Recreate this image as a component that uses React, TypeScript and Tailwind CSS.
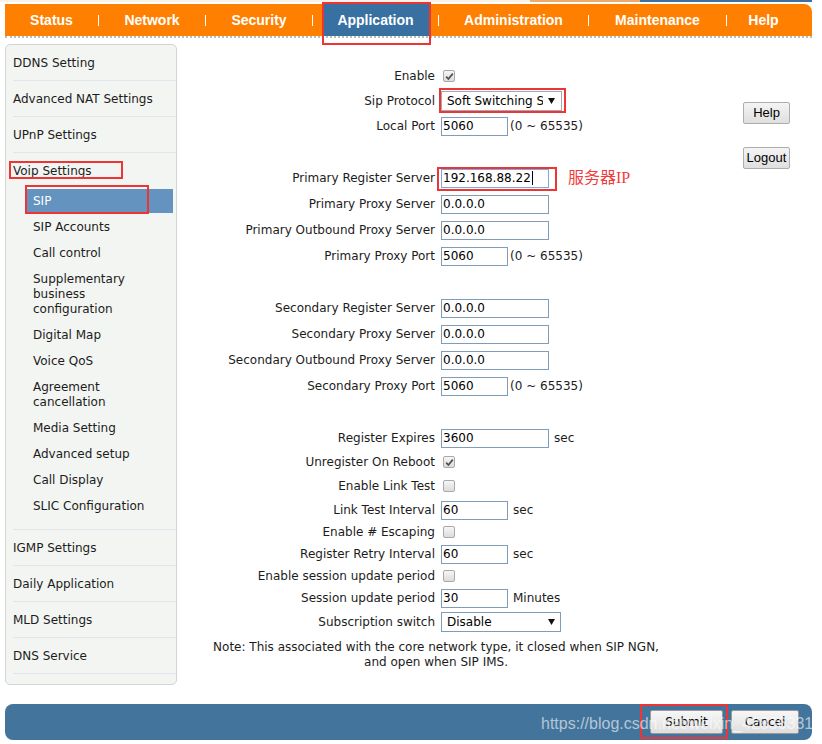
import React from "react";

function Check({ checked }: { checked?: boolean }) {
  return (
    <div className="ml-[2px] w-[12px] h-[12px] rounded-[2px] border border-[#a9a9a9] bg-gradient-to-b from-[#f6f6f6] to-[#dcdcdc] flex items-center justify-center">
      {checked && (
        <svg width="9" height="9" viewBox="0 0 9 9">
          <path d="M1.2 4.6 L3.4 7 L7.8 1.6" fill="none" stroke="#505050" strokeWidth="1.7" />
        </svg>
      )}
    </div>
  );
}

function Input({ value, wide }: { value: string; wide?: boolean }) {
  return (
    <div
      className={
        (wide ? "w-[108px]" : "w-[67px]") +
        " h-[19px] border border-[#7f9db9] bg-white flex items-center pl-[1px] text-black"
      }
    >
      {value}
    </div>
  );
}

function Arrow() {
  return (
    <svg width="7" height="6" viewBox="0 0 7 6">
      <path d="M0 0 H7 L3.5 6Z" fill="#111" />
    </svg>
  );
}

function Row({ label, h, children }: { label: string; h: string; children?: React.ReactNode }) {
  return (
    <div className={"flex items-center " + h}>
      <div className="w-[264px] shrink-0 text-right pr-[6px] whitespace-nowrap">{label}</div>
      <div className="flex items-center">{children}</div>
    </div>
  );
}

function Unit({ children, ml }: { children: React.ReactNode; ml: string }) {
  return <span className={ml + " whitespace-nowrap"}>{children}</span>;
}

const topItems1 = ["DDNS Setting", "Advanced NAT Settings", "UPnP Settings"];
const topItems2 = ["IGMP Settings", "Daily Application", "MLD Settings", "DNS Service"];

function Btn({ children, w }: { children: React.ReactNode; w: string }) {
  return (
    <div
      className={
        w +
        " h-[24px] border border-[#9a9a9a] rounded-[2px] bg-gradient-to-b from-[#f7f7f7] to-[#dedede] flex items-center justify-center text-black"
      }
    >
      {children}
    </div>
  );
}

export default function App() {
  return (
    <div className="w-[822px] h-[744px] bg-white relative overflow-hidden font-['DejaVu_Sans',sans-serif] text-[12px] text-[#1c1c1c]">
      {/* top strip */}
      <div className="h-[4px] flex">
        <div className="w-[530px] h-[2px] bg-[#fbf1e6]" />
        <div className="w-[110px] h-[2px] bg-[#edab6c]" />
        <div className="w-[172px] h-[2px] bg-[#3f6f9c]" />
      </div>

      {/* nav bar */}
      <div className="ml-[5px] w-[807px] h-[32px] bg-[#ff8000] rounded-tr-[8px] flex items-stretch font-['Liberation_Sans',Arial,sans-serif] font-bold text-[14px] text-white">
        <div className="w-[93px] flex items-center justify-center">Status</div>
        <div className="w-[1px] h-[11px] self-center bg-white" />
        <div className="w-[106px] flex items-center justify-center">Network</div>
        <div className="w-[1px] h-[11px] self-center bg-white" />
        <div className="w-[106px] flex items-center justify-center">Security</div>
        <div className="w-[1px] h-[11px] self-center bg-white" />
        <div className="w-[125px] flex items-stretch justify-center">
          <div className="relative w-[106px] bg-[#3870a2] flex items-center justify-center">
            Application
            <div className="absolute left-[-1px] right-[-2px] top-[-2px] bottom-[-9px] border-2 border-[#ee3535]" />
          </div>
        </div>
        <div className="w-[1px] h-[11px] self-center bg-white" />
        <div className="w-[149px] flex items-center justify-center">Administration</div>
        <div className="w-[1px] h-[11px] self-center bg-white" />
        <div className="w-[137px] flex items-center justify-center">Maintenance</div>
        <div className="w-[1px] h-[11px] self-center bg-white" />
        <div className="w-[73px] flex items-center justify-center">Help</div>
      </div>
      <div className="ml-[5px] w-[807px] h-[2px] border-b-2 border-dotted border-[#b9c2b2]" />

      {/* body */}
      <div className="flex mt-[6px]">
        {/* sidebar */}
        <div className="relative ml-[5px] w-[172px] h-[641px] shrink-0 bg-[#f3f5f2] border border-[#d4d4d4] rounded-[5px]">
          {topItems1.map((t) => (
            <div key={t} className="ml-[7px] h-[36px] border-b border-[#e1e5eb] flex items-center">
              {t}
            </div>
          ))}
          <div className="ml-[7px] border-b border-[#e1e5eb] pb-[10px]">
            <div className="h-[36px] flex items-center">Voip Settings</div>
            <div className="ml-[12px] mr-[3px] leading-[15px]">
              <div className="relative mb-[1px] py-[4.5px] pl-[8px] bg-[#6393be] text-white">
                SIP
                <div className="absolute left-0 top-[-4px] w-[124px] bottom-[-1px] border-2 border-[#ee3535]" />
              </div>
              <div className="py-[5.5px] pl-[8px]">SIP Accounts</div>
              <div className="py-[5.5px] pl-[8px]">Call control</div>
              <div className="py-[5.5px] pl-[8px]">
                Supplementary
                <br />
                business
                <br />
                configuration
              </div>
              <div className="py-[5.5px] pl-[8px]">Digital Map</div>
              <div className="py-[5.5px] pl-[8px]">Voice QoS</div>
              <div className="py-[5.5px] pl-[8px]">
                Agreement
                <br />
                cancellation
              </div>
              <div className="py-[5.5px] pl-[8px]">Media Setting</div>
              <div className="py-[5.5px] pl-[8px]">Advanced setup</div>
              <div className="py-[5.5px] pl-[8px]">Call Display</div>
              <div className="py-[5.5px] pl-[8px]">SLIC Configuration</div>
            </div>
          </div>
          {topItems2.map((t) => (
            <div key={t} className="ml-[7px] h-[36px] border-b border-[#e1e5eb] flex items-center">
              {t}
            </div>
          ))}
          <div className="absolute left-[3px] top-[116px] w-[114px] h-[18px] border-2 border-[#ee3535]" />
        </div>

        {/* form */}
        <div className="w-[566px] shrink-0 pt-[20px]">
          <Row label="Enable" h="h-[24px]">
            <Check checked />
          </Row>
          <Row label="Sip Protocol" h="h-[25px]">
            <div className="relative w-[121px] h-[20px] border border-[#a3aab3] bg-white flex items-center">
              <span className="pl-[5px] w-[101px] overflow-hidden whitespace-nowrap text-black">Soft Switching Server</span>
              <span className="ml-[5px]">
                <Arrow />
              </span>
              <div className="absolute left-[-3px] right-[-5px] top-[-4px] bottom-[-3px] border-2 border-[#ee3535]" />
            </div>
          </Row>
          <Row label="Local Port" h="h-[26px]">
            <Input value="5060" />
            <Unit ml="ml-[2px]">(0 ~ 65535)</Unit>
          </Row>
          <div className="h-[26px]" />
          <Row label="Primary Register Server" h="h-[26px]">
            <div className="relative w-[108px] h-[19px] border border-[#7aa9dc] bg-white flex items-center pl-[1px] text-black">
              192.168.88.22
              <span className="ml-[1px] w-[1px] h-[14px] bg-black" />
              <div className="absolute left-[-5px] right-[-9px] top-[-3px] bottom-[-4px] border-2 border-[#ee3535]" />
            </div>
            <span className="ml-[19px] text-[16px] text-[#f23c3c] font-['Liberation_Serif','Noto_Sans_CJK_SC',serif]">服务器IP</span>
          </Row>
          <Row label="Primary Proxy Server" h="h-[26px]">
            <Input value="0.0.0.0" wide />
          </Row>
          <Row label="Primary Outbound Proxy Server" h="h-[26px]">
            <Input value="0.0.0.0" wide />
          </Row>
          <Row label="Primary Proxy Port" h="h-[26px]">
            <Input value="5060" />
            <Unit ml="ml-[2px]">(0 ~ 65535)</Unit>
          </Row>
          <div className="h-[26px]" />
          <Row label="Secondary Register Server" h="h-[26px]">
            <Input value="0.0.0.0" wide />
          </Row>
          <Row label="Secondary Proxy Server" h="h-[26px]">
            <Input value="0.0.0.0" wide />
          </Row>
          <Row label="Secondary Outbound Proxy Server" h="h-[26px]">
            <Input value="0.0.0.0" wide />
          </Row>
          <Row label="Secondary Proxy Port" h="h-[26px]">
            <Input value="5060" />
            <Unit ml="ml-[2px]">(0 ~ 65535)</Unit>
          </Row>
          <div className="h-[26px]" />
          <Row label="Register Expires" h="h-[26px]">
            <Input value="3600" wide />
            <Unit ml="ml-[5px]">sec</Unit>
          </Row>
          <Row label="Unregister On Reboot" h="h-[22px]">
            <Check checked />
          </Row>
          <Row label="Enable Link Test" h="h-[26px]">
            <Check />
          </Row>
          <Row label="Link Test Interval" h="h-[22px]">
            <Input value="60" />
            <Unit ml="ml-[5px]">sec</Unit>
          </Row>
          <Row label="Enable # Escaping" h="h-[22px]">
            <Check />
          </Row>
          <Row label="Register Retry Interval" h="h-[22px]">
            <Input value="60" />
            <Unit ml="ml-[5px]">sec</Unit>
          </Row>
          <Row label="Enable session update period" h="h-[22px]">
            <Check />
          </Row>
          <Row label="Session update period" h="h-[22px]">
            <Input value="30" />
            <Unit ml="ml-[5px]">Minutes</Unit>
          </Row>
          <Row label="Subscription switch" h="h-[26px]">
            <div className="w-[120px] h-[20px] border border-[#7f9db9] bg-white flex items-center">
              <span className="pl-[5px] w-[103px] text-black">Disable</span>
              <span className="ml-[3px]">
                <Arrow />
              </span>
            </div>
          </Row>
          <div className="ml-[23px] w-[472px] mt-[5px] text-center leading-[15px]">
            Note: This associated with the core network type, it closed when SIP NGN,
            <br />
            and open when SIP IMS.
          </div>
        </div>

        {/* right buttons */}
        <div className="pt-[58px] flex flex-col gap-[23px] font-['Liberation_Sans',Arial,sans-serif] text-[13px]">
          <div className="w-[47px] h-[22px] border border-[#adadad] rounded-[2px] bg-gradient-to-b from-[#f4f4f4] to-[#dfdfdf] flex items-center justify-center text-black">
            Help
          </div>
          <div className="w-[47px] h-[22px] border border-[#adadad] rounded-[2px] bg-gradient-to-b from-[#f4f4f4] to-[#dfdfdf] flex items-center justify-center text-black">
            Logout
          </div>
        </div>
      </div>

      {/* bottom bar */}
      <div className="relative ml-[5px] w-[807px] mt-[19px] h-[36px] bg-[#43749b] rounded-[8px] flex items-center justify-end pr-[13px] gap-[8px]">
        <div className="relative">
          <Btn w="w-[73px]">Submit</Btn>
          <div className="absolute left-[-10px] right-[-5px] top-[-6px] bottom-[-5px] border-2 border-[#ee3535]" />
        </div>
        <Btn w="w-[68px]">Cancel</Btn>
        <div className="absolute left-[536px] top-[8px] whitespace-nowrap font-['Liberation_Sans',Arial,sans-serif] text-[16px] text-white/60 pointer-events-none">
          https://blog.csdn.net/weixin_42836331
        </div>
      </div>
    </div>
  );
}
